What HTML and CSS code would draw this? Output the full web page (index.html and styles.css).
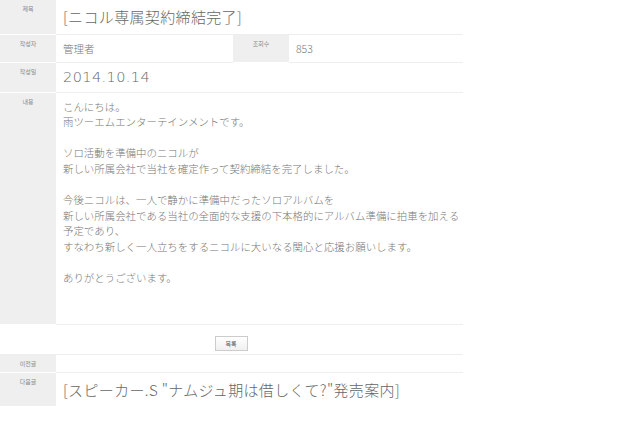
FILE: index.html
```html
<!DOCTYPE html>
<html lang="ja">
<head>
    <meta charset="UTF-8">
    <title>ニコル専属契約締結完了</title>
    <link rel="stylesheet" href="styles.css">
</head>
<body>
    <table class="view">
        <colgroup>
            <col class="c-label">
            <col class="c-name">
            <col class="c-label2">
            <col>
        </colgroup>
        <tr class="row-title">
            <th>제목</th>
            <td colspan="3" class="big">[ニコル専属契約締結完了]</td>
        </tr>
        <tr class="row-info">
            <th>작성자</th>
            <td class="small">管理者</td>
            <th>조회수</th>
            <td class="small">853</td>
        </tr>
        <tr class="row-date">
            <th>작성일</th>
            <td colspan="3" class="big num">2014.10.14</td>
        </tr>
        <tr class="row-body">
            <th>내용</th>
            <td colspan="3" class="body">
                <p>こんにちは。<br>雨ツーエムエンターテインメントです。</p>
                <p>ソロ活動を準備中のニコルが<br>新しい所属会社で当社を確定作って契約締結を完了しました。</p>
                <p>今後ニコルは、一人で静かに準備中だったソロアルバムを<br>新しい所属会社である当社の全面的な支援の下本格的にアルバム準備に拍車を加える<br>予定であり、<br>すなわち新しく一人立ちをするニコルに大いなる関心と応援お願いします。</p>
                <p>ありがとうございます。</p>
            </td>
        </tr>
        <tr class="row-btn">
            <td colspan="4"><button class="btn">목록</button></td>
        </tr>
        <tr class="row-prev">
            <th>이전글</th>
            <td colspan="3"></td>
        </tr>
        <tr class="row-next">
            <th>다음글</th>
            <td colspan="3" class="big">[スピーカー.S "ナムジュ期は借しくて?"発売案内]</td>
        </tr>
    </table>
</body>
</html>
```
FILE: styles.css
```css
*{
    padding: 0;
    margin: 0;
}
body{
    background: #fff;
    font-family: "Noto Sans CJK JP", "Noto Sans CJK KR", sans-serif;
    color: #777;
}
.view{
    width: 463px;
    border-collapse: collapse;
    table-layout: fixed;
}
.c-label{
    width: 56px;
}
.c-name{
    width: 177px;
}
.c-label2{
    width: 56px;
}
.view th{
    background: #efefef;
    border-bottom: 1px solid #fff;
    font-family: "Noto Sans CJK KR", sans-serif;
    font-size: 6px;
    font-weight: normal;
    color: #888;
    vertical-align: top;
    padding-top: 5px;
    line-height: 8px;
}
.view td{
    border-bottom: 1px solid #eee;
    padding-left: 7px;
    vertical-align: middle;
    white-space: nowrap;
}
.row-title{
    height: 34px;
}
.row-info{
    height: 28px;
}
.row-date{
    height: 30px;
}
.row-body{
    height: 232px;
}
.row-btn{
    height: 30px;
}
.row-prev{
    height: 18px;
}
.row-next{
    height: 34px;
}
.view .big{
    font-size: 15px;
    font-weight: 300;
    color: #666;
    letter-spacing: 0.35px;
}
.view .num{
    font-family: "DejaVu Sans", sans-serif;
    font-size: 14.5px;
    letter-spacing: 0.4px;
}
.view .small{
    font-size: 10.5px;
    font-weight: 300;
    color: #777;
}
.view .body{
    vertical-align: top;
    padding-top: 6px;
    font-size: 10.45px;
    font-weight: 300;
    line-height: 15.6px;
}
.body p{
    margin-bottom: 15.6px;
}
.row-btn td{
    text-align: center;
    padding-left: 0;
    padding-right: 1px;
}
.row-next td{
    border-bottom: none;
}
.row-next th{
    border-bottom: none;
}
.btn{
    width: 33px;
    height: 15px;
    border: 1px solid #ccc;
    background: linear-gradient(#fff, #f0f0f0);
    font-family: "Noto Sans CJK KR", sans-serif;
    font-size: 6px;
    color: #555;
    cursor: pointer;
}
```
